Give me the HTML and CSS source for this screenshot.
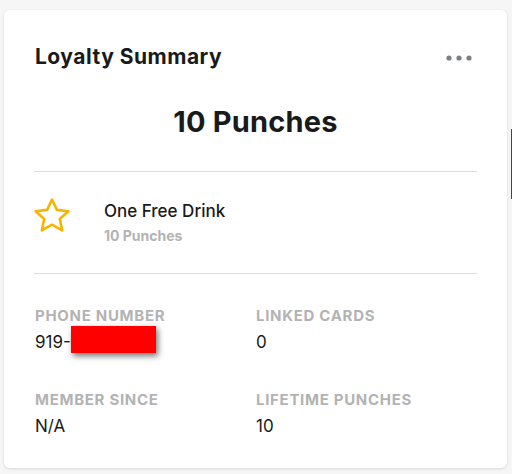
FILE: index.html
```html
<!DOCTYPE html>
<html>
<head>
	<meta charset="utf-8">
	<meta name="viewport" content="width=device-width, initial-scale=1">
	<title>Loyalty Summary</title>

	<link rel="stylesheet" href="styles.css">
</head>
<body>

	<div class="card">
		<div class="card-header">
			<h2 class="title">Loyalty Summary</h2>
			<svg class="more" width="28" height="8" viewBox="0 0 28 8">
				<circle cx="4" cy="4" r="2.6" fill="#7b8086"/>
				<circle cx="14" cy="4" r="2.6" fill="#7b8086"/>
				<circle cx="24" cy="4" r="2.6" fill="#7b8086"/>
			</svg>
		</div>

		<div class="balance">10 Punches</div>

		<div class="reward">
			<svg class="star" width="40" height="37" viewBox="0 0 40 37">
				<path d="M20 2.5 L24.9 12.9 L36.4 14.2 L27.8 22 L30.2 33.4 L20 27.6 L9.8 33.4 L12.2 22 L3.6 14.2 L15.1 12.9 Z" fill="none" stroke="#f7b500" stroke-width="2.6" stroke-linejoin="round"/>
			</svg>
			<div class="reward-text">
				<div class="reward-name">One Free Drink</div>
				<div class="reward-cost">10 Punches</div>
			</div>
		</div>

		<div class="details">
			<div class="field">
				<div class="label">Phone Number</div>
				<div class="value">919-<span class="redacted"></span></div>
			</div>
			<div class="field">
				<div class="label">Linked Cards</div>
				<div class="value">0</div>
			</div>
			<div class="field">
				<div class="label">Member Since</div>
				<div class="value">N/A</div>
			</div>
			<div class="field">
				<div class="label">Lifetime Punches</div>
				<div class="value">10</div>
			</div>
		</div>
	</div>

	<div class="edge"></div>

</body>
</html>
```

FILE: styles.css
```css
* {
	margin: 0;
	padding: 0;
	box-sizing: border-box;
}

html {
	font-family: "Inter", "Liberation Sans", sans-serif;
	color: #1a1a1a;
}

body {
	background-color: #f6f6f6;
	height: 474px;
	overflow: hidden;
	padding: 10px 5px 0 4px;
}

.card {
	background-color: #fff;
	border-radius: 6px;
	box-shadow: 0 1px 3px rgba(0, 0, 0, .13);
	padding: 35px 30px 31px 30px;
}

.card-header {
	display: flex;
	align-items: center;
	justify-content: space-between;
}

.title {
	font-size: 21px;
	line-height: 24px;
	font-weight: 700;
	letter-spacing: .5px;
	padding-left: 1px;
}

.more {
	margin-right: 4px;
	margin-top: 2px;
}

.balance {
	text-align: center;
	font-size: 29px;
	line-height: 34px;
	font-weight: 700;
	letter-spacing: .2px;
	margin-top: 36px;
	padding-bottom: 32px;
	border-bottom: 1px solid #dcdcdc;
}

.reward {
	display: flex;
	align-items: flex-start;
	gap: 32px;
	padding: 25px 0 29px 0;
	border-bottom: 1px solid #dcdcdc;
}

.star {
	margin-left: -2px;
}

.reward-text {
	padding-top: 4px;
}

.reward-name {
	font-size: 17px;
	line-height: 20px;
	font-weight: 500;
}

.reward-cost {
	margin-top: 7px;
	font-size: 14px;
	line-height: 16px;
	font-weight: 700;
	color: #b3b3b3;
}

.details {
	display: grid;
	grid-template-columns: 1fr 1fr;
	row-gap: 38px;
	padding-top: 33px;
	padding-left: 1px;
}

.label {
	font-size: 15px;
	line-height: 17px;
	font-weight: 700;
	letter-spacing: .7px;
	text-transform: uppercase;
	color: #b3b3b3;
}

.value {
	margin-top: 7px;
	font-size: 17px;
	line-height: 22px;
}

.redacted {
	display: inline-block;
	width: 85px;
	height: 27px;
	vertical-align: top;
	margin: -5px 0 -1px 0;
	background-color: #ff0000;
	box-shadow: 2px 3px 6px rgba(0, 0, 0, .55);
}

.edge {
	position: fixed;
	top: 129px;
	right: 0;
	width: 1px;
	height: 70px;
	background-color: #444;
}
```
